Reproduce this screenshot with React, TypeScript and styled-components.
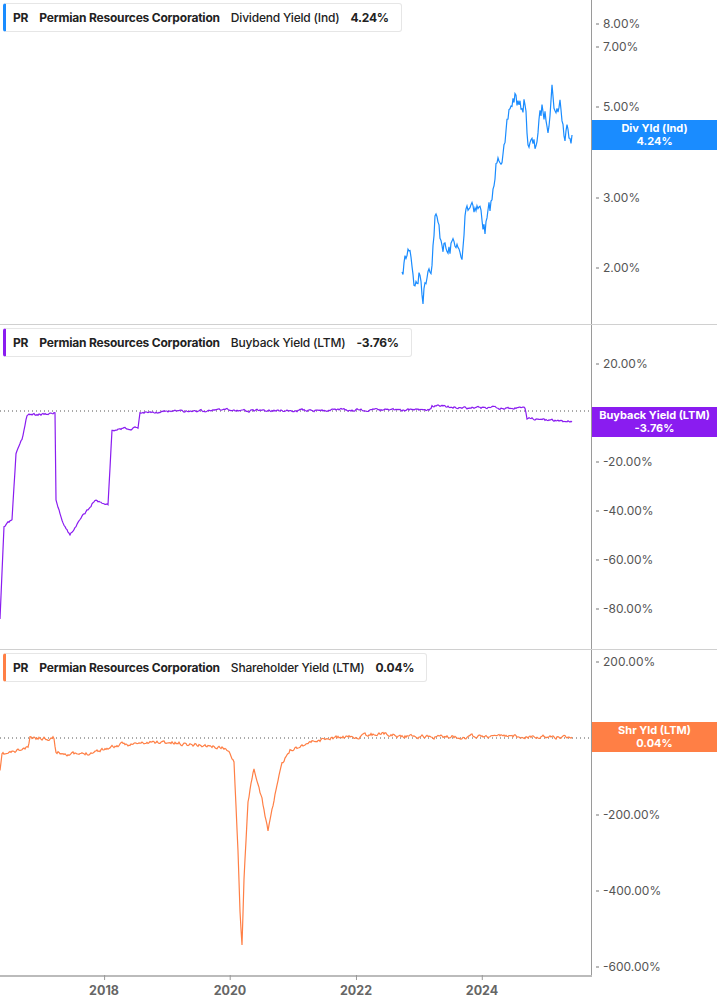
import React from "react";
import styled, { createGlobalStyle } from "styled-components";

const G = createGlobalStyle`
  html,body{margin:0;padding:0;background:#fff;font-family:Inter,"Noto Sans",sans-serif;}
`;

const W = 592;
const Page = styled.div`width:717px;height:1005px;display:flex;flex-direction:column;overflow:hidden;`;
const Row = styled.div<{ $h: number; $border?: boolean }>`
  height:${p => p.$h}px;display:flex;box-sizing:border-box;
  border-bottom:${p => (p.$border ? "1px solid #d0d0d0" : "none")};
`;
const Plot = styled.div`width:${W}px;position:relative;border-right:1px solid #9a9a9a;box-sizing:border-box;`;
const Axis = styled.div`flex:1;position:relative;`;
const Tick = styled.div`position:absolute;left:4px;font-size:12px;color:#555;transform:translateY(-50%);
  &::before{content:"";display:inline-block;width:3px;height:1px;background:#777;vertical-align:middle;margin-right:4px;}`;
const Tag = styled.div<{ $c: string }>`position:absolute;left:0;right:0;height:30px;background:${p => p.$c};color:#fff;
  font-size:11px;font-weight:700;text-align:center;line-height:13px;display:flex;flex-direction:column;justify-content:center;`;
const Legend = styled.div<{ $c: string }>`position:absolute;left:3px;top:3px;height:27px;display:flex;align-items:center;gap:11px;
  padding:0 12px 0 7px;background:rgba(255,255,255,.95);border:1px solid #e6e6e6;border-left:3px solid ${p => p.$c};border-radius:3px;
  font-size:12px;color:#222;font-weight:500;white-space:nowrap;letter-spacing:-0.2px;
  b{font-weight:700}`;
const Svg = styled.svg`position:absolute;left:0;top:0;`;
const XAxis = styled.div`height:30px;width:${W}px;position:relative;border-top:2px solid #bbb;box-sizing:border-box;`;
const XLab = styled.div`position:absolute;top:6px;transform:translateX(-50%);font-size:12.5px;font-weight:700;color:#666;
  &::before{content:"";position:absolute;left:50%;top:-8px;width:1px;height:5px;background:#999;}`;

function rng(seed: number) { let s = seed; return () => { s = (s * 16807) % 2147483647; return s / 2147483647; }; }
function build(keys: [number, number][], noise: number, seed: number, step = false) {
  const r = rng(seed); let d = ""; let n = 0;
  for (let i = 0; i < keys.length - 1; i++) {
    const [x0, y0] = keys[i], [x1, y1] = keys[i + 1];
    if (step && x1 === x0) { d += ` L${x1},${y1}`; continue; }
    for (let x = x0; x < x1; x += 1) {
      const t = (x - x0) / (x1 - x0);
      n = n * 0.6 + (r() - 0.5) * noise;
      const y = y0 + (y1 - y0) * t + n;
      d += (d ? " L" : "M") + x + "," + y.toFixed(1);
    }
  }
  const l = keys[keys.length - 1]; d += ` L${l[0]},${l[1]}`;
  return d;
}

const p1 = build([[402,280],[404,265],[410,245],[415,285],[420,275],[423,295],[428,265],[432,260],[435,215],[440,235],[448,255],[455,240],[462,265],[466,205],[472,200],[480,210],[485,230],[490,210],[494,190],[498,150],[505,150],[510,110],[515,95],[520,110],[525,100],[528,140],[535,150],[538,130],[542,110],[548,120],[552,85],[556,115],[560,100],[565,140],[568,125],[572,135]], 16, 7);
const p2 = build([[0,620],[4,527],[12,520],[16,455],[22,440],[27,415],[55,413],[56,500],[62,520],[70,535],[80,520],[95,500],[108,505],[112,430],[138,428],[140,412],[240,410],[250,411],[340,410],[430,410],[432,406],[470,408],[525,408],[527,418],[545,420],[572,422]], 2, 3, true);
const p3 = build([[0,772],[2,755],[28,748],[30,738],[54,738],[56,752],[80,755],[120,745],[160,742],[200,745],[225,748],[234,760],[238,850],[240,910],[242,945],[244,880],[248,800],[254,770],[262,800],[268,830],[274,800],[278,780],[282,765],[290,750],[310,742],[330,738],[360,737],[380,733],[400,736],[440,737],[500,736],[540,737],[572,737]], 3, 11);

type Pan = { top: number; h: number; c: string; label: string; val: string; ticks: [string, number][]; tag: [string, string, number]; path: string; dotted?: number };
const panels: Pan[] = [
  { top: 0, h: 325, c: "#1a8cff", label: "Dividend Yield (Ind)", val: "4.24%", ticks: [["8.00%",23],["7.00%",46],["5.00%",106],["3.00%",197],["2.00%",267]], tag: ["Div Yld (Ind)","4.24%",120], path: p1 },
  { top: 325, h: 325, c: "#8a1cf0", label: "Buyback Yield (LTM)", val: "-3.76%", ticks: [["20.00%",363],["-20.00%",461],["-40.00%",510],["-60.00%",559],["-80.00%",608]], tag: ["Buyback Yield (LTM)","-3.76%",407], path: p2, dotted: 411 },
  { top: 650, h: 325, c: "#ff7f45", label: "Shareholder Yield (LTM)", val: "0.04%", ticks: [["200.00%",661],["-200.00%",814],["-400.00%",890],["-600.00%",966]], tag: ["Shr Yld (LTM)","0.04%",722], path: p3, dotted: 738 },
];

export default function App() {
  return (
    <Page>
      <G />
      {panels.map((p, i) => (
        <Row key={i} $h={p.h} $border={i < 2}>
          <Plot>
            <Svg width={W} height={p.h} viewBox={`0 ${p.top} ${W} ${p.h}`}>
              {p.dotted && <line x1={0} x2={W} y1={p.dotted} y2={p.dotted} stroke="#555" strokeDasharray="1 3" />}
              <path d={p.path} fill="none" stroke={p.c} strokeWidth={1.2} />
            </Svg>
            <Legend $c={p.c}><b>PR</b><b>Permian Resources Corporation</b><span>{p.label}</span><b>{p.val}</b></Legend>
          </Plot>
          <Axis>
            {p.ticks.map(([t, y]) => <Tick key={t} style={{ top: y - p.top }}>{t}</Tick>)}
            <Tag $c={p.c} style={{ top: p.tag[2] - p.top }}><span>{p.tag[0]}</span><span>{p.tag[1]}</span></Tag>
          </Axis>
        </Row>
      ))}
      <XAxis>
        {[["2018",104],["2020",230],["2022",356],["2024",482]].map(([t, x]) => <XLab key={t} style={{ left: Number(x) }}>{t}</XLab>)}
      </XAxis>
    </Page>
  );
}
